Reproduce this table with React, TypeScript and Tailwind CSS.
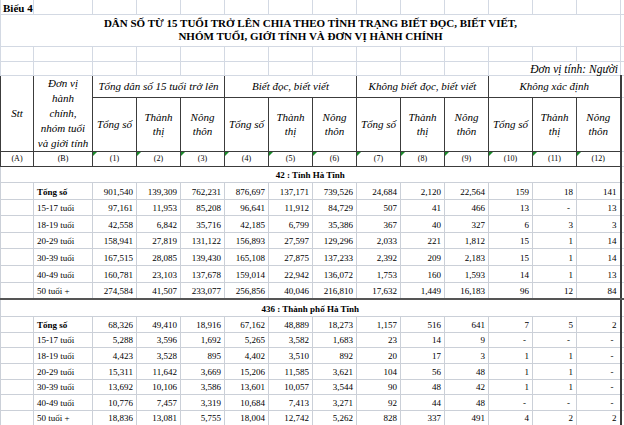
import React from "react";

type Row = { label: string; bold?: boolean; values: string[] };

const block1: Row[] = [
  { label: "Tổng số", bold: true, values: ["901,540", "139,309", "762,231", "876,697", "137,171", "739,526", "24,684", "2,120", "22,564", "159", "18", "141"] },
  { label: "15-17 tuổi", values: ["97,161", "11,953", "85,208", "96,641", "11,912", "84,729", "507", "41", "466", "13", "-", "13"] },
  { label: "18-19 tuổi", values: ["42,558", "6,842", "35,716", "42,185", "6,799", "35,386", "367", "40", "327", "6", "3", "3"] },
  { label: "20-29 tuổi", values: ["158,941", "27,819", "131,122", "156,893", "27,597", "129,296", "2,033", "221", "1,812", "15", "1", "14"] },
  { label: "30-39 tuổi", values: ["167,515", "28,085", "139,430", "165,108", "27,875", "137,233", "2,392", "209", "2,183", "15", "1", "14"] },
  { label: "40-49 tuổi", values: ["160,781", "23,103", "137,678", "159,014", "22,942", "136,072", "1,753", "160", "1,593", "14", "1", "13"] },
  { label: "50 tuổi +", values: ["274,584", "41,507", "233,077", "256,856", "40,046", "216,810", "17,632", "1,449", "16,183", "96", "12", "84"] },
];

const block2: Row[] = [
  { label: "Tổng số", bold: true, values: ["68,326", "49,410", "18,916", "67,162", "48,889", "18,273", "1,157", "516", "641", "7", "5", "2"] },
  { label: "15-17 tuổi", values: ["5,288", "3,596", "1,692", "5,265", "3,582", "1,683", "23", "14", "9", "-", "-", "-"] },
  { label: "18-19 tuổi", values: ["4,423", "3,528", "895", "4,402", "3,510", "892", "20", "17", "3", "1", "1", "-"] },
  { label: "20-29 tuổi", values: ["15,311", "11,642", "3,669", "15,206", "11,585", "3,621", "104", "56", "48", "1", "1", "-"] },
  { label: "30-39 tuổi", values: ["13,692", "10,106", "3,586", "13,601", "10,057", "3,544", "90", "48", "42", "1", "1", "-"] },
  { label: "40-49 tuổi", values: ["10,776", "7,457", "3,319", "10,684", "7,413", "3,271", "92", "44", "48", "-", "-", "-"] },
  { label: "50 tuổi +", values: ["18,836", "13,081", "5,755", "18,004", "12,742", "5,262", "828", "337", "491", "4", "2", "2"] },
];

const groups = ["Tổng dân số 15 tuổi trở lên", "Biết đọc, biết viết", "Không biết đọc, biết viết", "Không xác định"];
const twelve = Array.from({ length: 12 }, (_, i) => i);

// light sheet gridline
const grid = "border border-[#d3d9e3]";
// data cell border
const cell = "border border-[#cbd0d8]";
// header border
const head = "border border-[#3c3c3c]";

function Block({ title, rows, titleH, rowH }: { title: string; rows: Row[]; titleH: string; rowH: string }) {
  return (
    <>
      <tr>
        <td colSpan={14} className={`${cell} border-r-2 border-r-[#3c3c3c] text-center align-bottom font-bold text-[9px] leading-[10px] pb-[2px] ${titleH}`}>
          {title}
        </td>
        <td className={grid}></td>
      </tr>
      {rows.map((r, ri) => {
        const last = ri === rows.length - 1;
        const bottom = last ? "border-b-2 border-b-[#555]" : "";
        return (
          <tr key={r.label}>
            <td className={`${cell} ${bottom} ${rowH}`}></td>
            <td className={`${cell} ${bottom} pl-[3px] align-bottom pb-[2px] text-[9px] leading-[10px] ${r.bold ? "font-bold" : ""}`}>
              {r.label}
            </td>
            {r.values.map((v, i) => (
              <td
                key={i}
                className={`${cell} ${bottom} ${i === 11 ? "border-r-2 border-r-[#3c3c3c]" : ""} text-right align-bottom pb-[2px] text-[9px] leading-[10px] ${v === "-" ? "pr-[6px]" : "pr-[3px]"}`}
              >
                {v}
              </td>
            ))}
            <td className={`${grid} ${bottom}`}></td>
          </tr>
        );
      })}
    </>
  );
}

export default function App() {
  return (
    <div className="w-[624px] h-[425px] overflow-hidden bg-white text-black font-[family-name:'Liberation_Serif','Times_New_Roman',serif]">
      <table className="table-fixed border-collapse w-[624px]">
        <colgroup>
          <col className="w-[33px]" />
          <col className="w-[59px]" />
          {twelve.map((i) => (
            <col key={i} className="w-[44px]" />
          ))}
          <col className="w-[4px]" />
        </colgroup>
        <tbody>
          {/* sheet rows above the table */}
          <tr>
            <td className={`${grid} border-t-0 h-[14px] pl-[2px] align-bottom font-bold text-[11px] leading-[12px]`}>Biểu 4</td>
            {Array.from({ length: 14 }, (_, i) => (
              <td key={i} className={`${grid} border-t-0`}></td>
            ))}
          </tr>
          <tr>
            <td colSpan={14} className={`${grid} h-[32px] text-center align-bottom pb-[3px] font-bold text-[11px] leading-[13px]`}>
              DÂN SỐ TỪ 15 TUỔI TRỞ LÊN CHIA THEO TÌNH TRẠNG BIẾT ĐỌC, BIẾT VIẾT,
              <br />
              NHÓM TUỔI, GIỚI TÍNH VÀ ĐƠN VỊ HÀNH CHÍNH
            </td>
            <td className={grid}></td>
          </tr>
          <tr>
            {Array.from({ length: 15 }, (_, i) => (
              <td key={i} className={`${grid} h-[15px]`}></td>
            ))}
          </tr>
          <tr>
            {Array.from({ length: 11 }, (_, i) => (
              <td key={i} className={`${grid} h-[14px]`}></td>
            ))}
            <td colSpan={3} className={`${grid} text-right pr-[2px] align-bottom italic text-[11.5px] leading-[12px] whitespace-nowrap`}>
              Đơn vị tính: Người
            </td>
            <td className={grid}></td>
          </tr>

          {/* header */}
          <tr>
            <td rowSpan={2} className={`${head} text-center align-middle italic text-[11px]`}>Stt</td>
            <td rowSpan={2} className={`${head} text-center align-middle italic text-[11px] leading-[15px]`}>
              Đơn vị
              <br />
              hành
              <br />
              chính,
              <br />
              nhóm tuổi
              <br />
              và giới tính
            </td>
            {groups.map((g, i) => (
              <td
                key={g}
                colSpan={3}
                className={`${head} ${i === 3 ? "border-r-2" : ""} h-[22px] text-center align-middle italic text-[11px] whitespace-nowrap overflow-hidden`}
              >
                {g}
              </td>
            ))}
            <td className={grid}></td>
          </tr>
          <tr>
            {twelve.map((i) => (
              <td
                key={i}
                className={`${head} ${i === 11 ? "border-r-2" : ""} h-[52px] text-center align-middle italic text-[11px] leading-[14px]`}
              >
                {i % 3 === 0 ? (
                  "Tổng số"
                ) : i % 3 === 1 ? (
                  <>
                    Thành
                    <br />
                    thị
                  </>
                ) : (
                  <>
                    Nông
                    <br />
                    thôn
                  </>
                )}
              </td>
            ))}
            <td className={grid}></td>
          </tr>
          <tr>
            <td className={`${head} h-[15px] text-center align-middle text-[8px] leading-[9px]`}>(A)</td>
            <td className={`${head} text-center align-middle text-[8px] leading-[9px]`}>(B)</td>
            {twelve.map((i) => (
              <td
                key={i}
                className={`${head} ${i === 11 ? "border-r-2" : ""} relative text-center align-middle text-[8px] leading-[9px]`}
              >
                <span className="absolute left-0 top-0 w-0 h-0 border-t-[4px] border-t-[#1a8a2a] border-r-[4px] border-r-transparent"></span>
                ({i + 1})
              </td>
            ))}
            <td className={grid}></td>
          </tr>

          <Block title="42 : Tỉnh Hà Tĩnh" rows={block1} titleH="h-[16.6px]" rowH="h-[16.6px]" />
          <Block title="436 : Thành phố Hà Tĩnh" rows={block2} titleH="h-[18px]" rowH="h-[15.6px]" />
        </tbody>
      </table>
    </div>
  );
}
